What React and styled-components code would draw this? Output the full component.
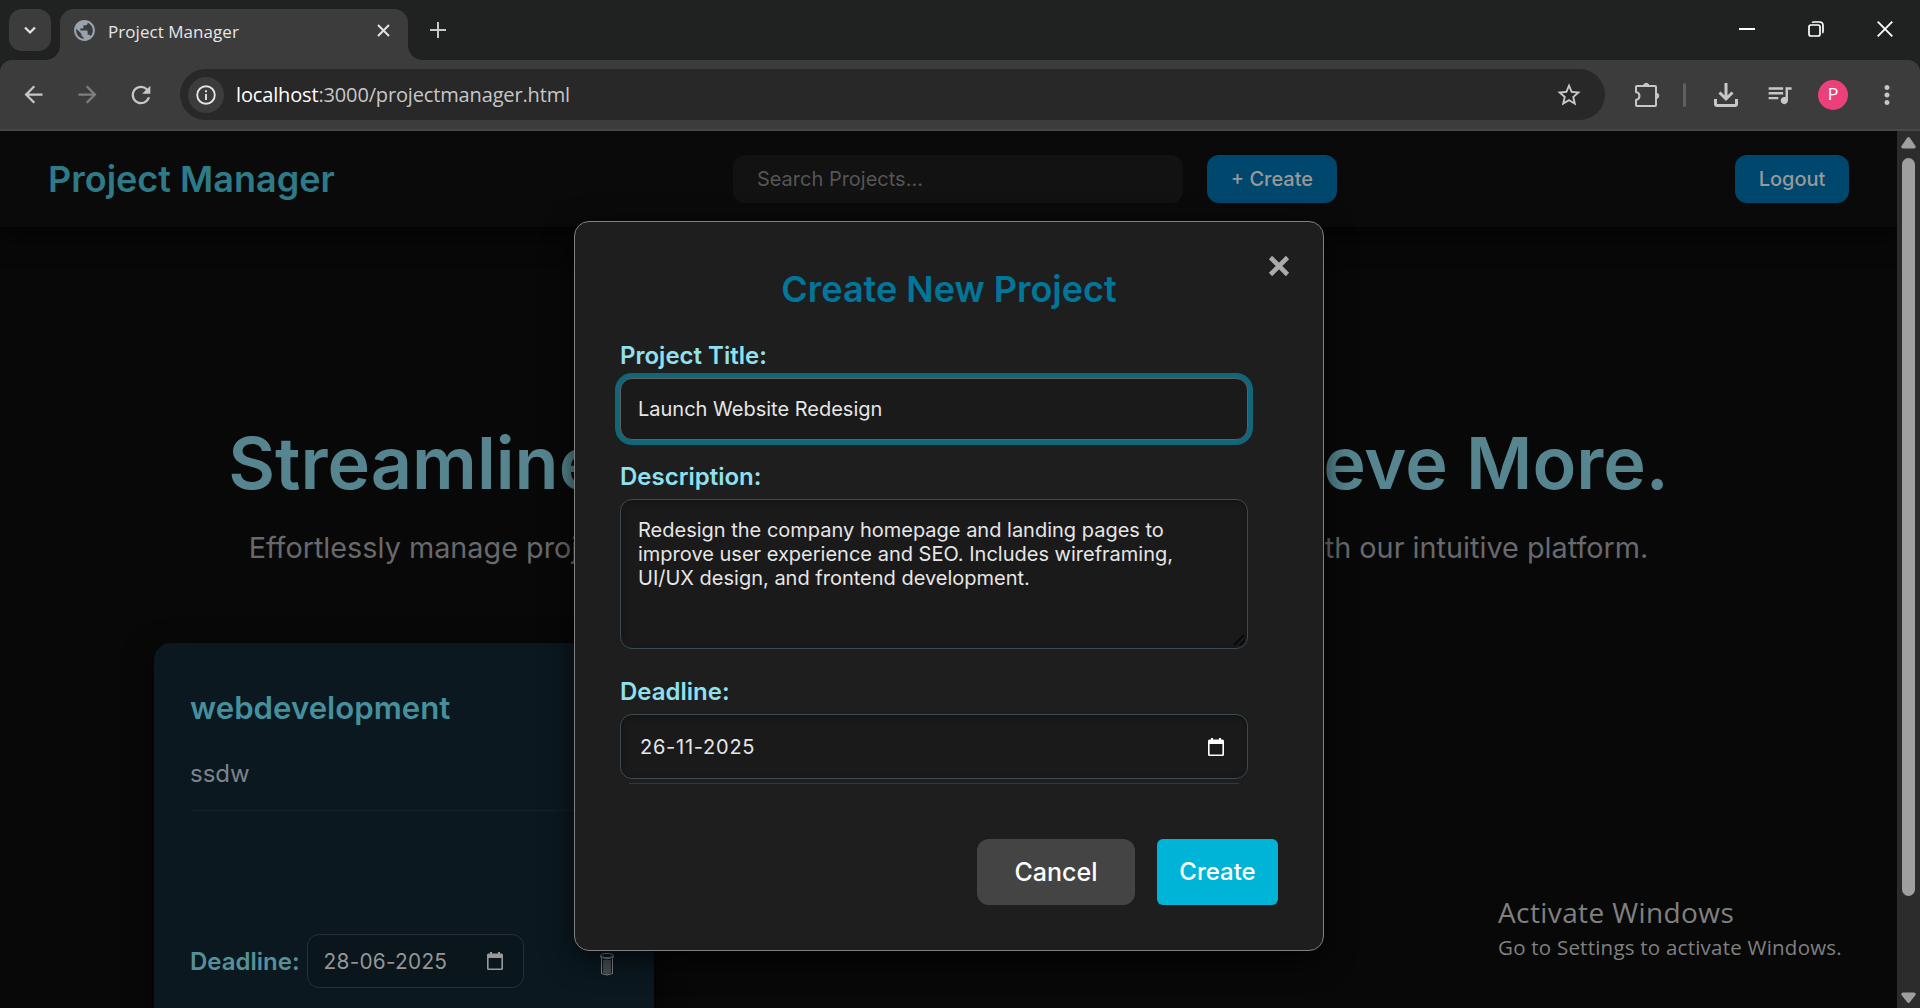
import React from "react";
import styled, { createGlobalStyle } from "styled-components";
import { MdArrowBack, MdArrowForward, MdRefresh, MdStarBorder, MdQueueMusic, MdMoreVert, MdPublic } from "react-icons/md";

const Global = createGlobalStyle`
  * { box-sizing: border-box; }
  html, body { margin: 0; padding: 0; background: #080808; overflow: hidden; }
  h1, h2, h3, p { margin: 0; }
  button { border: 0; padding: 0; margin: 0; background: none; font: inherit; color: inherit; }
`;

const ui = `"Open Sans", "Noto Sans", sans-serif`;

const Browser = styled.div`
  width: 1920px;
  height: 1008px;
  display: flex;
  flex-direction: column;
  overflow: hidden;
  font-family: Inter, sans-serif;
  background: #202221;
`;

/* Tab strip */
const TabStrip = styled.div`
  height: 60px;
  flex: none;
  display: flex;
  padding: 9px 27px 0 9px;
  align-items: flex-start;
`;
const TabSearch = styled.button`
  width: 42px;
  height: 42px;
  border-radius: 13px;
  background: #3c3c3c;
  display: grid;
  place-items: center;
`;
const Tab = styled.div`
  position: relative;
  width: 348px;
  height: 51px;
  margin-left: 9px;
  padding: 0 17px 9px 12px;
  border-radius: 14px 14px 0 0;
  background: #3c3c3c;
  display: flex;
  align-items: center;
  color: #c3c8cf;
  &::before, &::after {
    content: "";
    position: absolute;
    bottom: 0;
    width: 14px;
    height: 14px;
  }
  &::before { left: -14px; background: radial-gradient(circle at 0 0, transparent 13.5px, #3c3c3c 14px); }
  &::after { right: -14px; background: radial-gradient(circle at 100% 0, transparent 13.5px, #3c3c3c 14px); }
`;
const TabTitle = styled.span`
  flex: 1;
  margin: 3px 0 0 11px;
  font: 400 17px/24px ${ui};
  letter-spacing: 0.05px;
  color: #e6e6e6;
`;
const NewTab = styled.button`
  width: 42px;
  height: 42px;
  margin-left: 9px;
  display: grid;
  place-items: center;
`;
const WindowControls = styled.div`
  margin-left: auto;
  display: flex;
  gap: 53px;
  padding-top: 12px;
`;

/* Toolbar */
const ToolbarBack = styled.div`
  flex: none;
  background: #202221;
`;
const Toolbar = styled.div`
  height: 71px;
  padding: 9px 6px 0;
  display: flex;
  align-items: flex-start;
  background: #3c3c3c;
  border-bottom: 2px solid #474747;
  border-radius: 12px 12px 0 0;
`;
const ToolButton = styled.button`
  width: 54px;
  height: 51px;
  padding-left: ${(p) => p.$nudge || "0"};
  display: grid;
  place-items: center;
  color: ${(p) => (p.$muted ? "#7f7f7f" : "#c7c7c7")};
`;
const Omnibox = styled.div`
  flex: 1;
  height: 51px;
  margin: 0 13px 0 12px;
  padding: 0 22px 0 8px;
  border-radius: 26px;
  background: #282828;
  display: flex;
  align-items: center;
  color: #c7c7c7;
`;
const SiteInfo = styled.span`
  width: 36px;
  height: 36px;
  border-radius: 50%;
  background: #3c3c3c;
  display: grid;
  place-items: center;
`;
const Url = styled.span`
  flex: 1;
  margin-left: 12px;
  font: 400 20px/28px ${ui};
  letter-spacing: -0.15px;
  color: #c7c7c7;
  b { font-weight: 400; color: #fff; }
`;
const Separator = styled.span`
  width: 3px;
  height: 24px;
  margin: 14px 12px 0 11px;
  border-radius: 2px;
  background: #5f5f5f;
`;
const Avatar = styled.span`
  width: 30px;
  height: 30px;
  border-radius: 50%;
  background: #ec407a;
  color: #fff;
  font: 400 16px/30px Roboto, sans-serif;
  text-align: center;
`;

/* Page */
const Viewport = styled.div`
  flex: 1;
  min-height: 0;
  display: flex;
`;
const Page = styled.main`
  position: relative;
  flex: 1;
  background: #080808;
  overflow: hidden;
`;
const Scrollbar = styled.div`
  width: 23px;
  background: #2c2c2c;
  display: flex;
  flex-direction: column;
  align-items: center;
  padding: 6px 0 5px;
`;
const Thumb = styled.div`
  width: 13px;
  height: 738px;
  margin: 9px 0 auto;
  border-radius: 7px;
  background: #9f9f9f;
`;
const Nav = styled.header`
  position: relative;
  height: 96px;
  padding: 0 48px;
  display: flex;
  align-items: center;
  justify-content: space-between;
  background: #0a0a0a;
  box-shadow: 0 5px 25px rgba(0, 0, 0, 0.8);
`;
const Brand = styled.h1`
  font-size: 36px;
  line-height: 48px;
  font-weight: 600;
  white-space: nowrap;
  color: #2f7a87;
`;
const NavCenter = styled.div`
  display: flex;
  gap: 24px;
`;
const Search = styled.div`
  width: 450px;
  height: 48px;
  padding: 0 24px;
  border-radius: 12px;
  background: #121212;
  color: #555;
  font-size: 20px;
  line-height: 48px;
`;
const NavButton = styled.button`
  width: ${(p) => p.$width};
  height: 48px;
  border-radius: 12px;
  background: #00476e;
  color: #999;
  font-size: 20px;
  font-weight: 500;
`;
const Hero = styled.section`
  padding-top: 192px;
  text-align: center;
  white-space: nowrap;
`;
const HeroTitle = styled.h2`
  font-size: 72px;
  line-height: 88px;
  font-weight: 600;
  color: #56858f;
`;
const HeroText = styled.p`
  margin-top: 21px;
  font-size: 28.8px;
  line-height: 40px;
  color: #68696c;
`;
const Card = styled.article`
  width: 500px;
  height: 480px;
  margin: 75px 0 0 154px;
  padding: 44px 36px;
  border-radius: 17px;
  background: #0b1820;
  box-shadow: 0 10px 30px rgba(0, 0, 0, 0.6);
`;
const CardTitle = styled.h3`
  font-size: 31.2px;
  line-height: 42px;
  font-weight: 600;
  color: #46909e;
`;
const CardText = styled.p`
  margin-top: 30px;
  padding-bottom: 21px;
  border-bottom: 1px solid #141f27;
  font-size: 24px;
  line-height: 30px;
  color: #7e838b;
`;
const CardFooter = styled.div`
  margin-top: 123px;
  display: flex;
  align-items: center;
  color: #569099;
  font-size: 24px;
  font-weight: 600;
`;
const CardDate = styled.div`
  width: 217px;
  height: 54px;
  margin-left: 7px;
  padding: 0 20px 0 16px;
  border: 1px solid #283036;
  border-radius: 12px;
  background: #0a151c;
  display: flex;
  align-items: center;
  justify-content: space-between;
  color: #959595;
  font-size: 20.8px;
  font-weight: 400;
  letter-spacing: 0.25px;
`;
const Trash = styled.button`
  margin: 6px 0 0 76px;
  line-height: 0;
`;

/* Dialog */
const Dialog = styled.section`
  position: absolute;
  left: 574px;
  top: 90px;
  width: 750px;
  height: 730px;
  padding: 46px 45px 45px;
  border: 1px solid #808080;
  border-radius: 15px;
  background: #1e1e1e;
  box-shadow: 0 8px 30px rgba(0, 0, 0, 0.7);
  display: flex;
  flex-direction: column;
`;
const Close = styled.button`
  position: absolute;
  right: 33px;
  top: 33px;
  line-height: 0;
`;
const DialogTitle = styled.h2`
  font-size: 36px;
  line-height: 42px;
  font-weight: 600;
  text-align: center;
  color: #00769b;
`;
const Form = styled.div`
  width: 628px;
  margin-top: 31px;
  display: flex;
  flex-direction: column;
`;
const Label = styled.label`
  margin-bottom: 7px;
  font-size: 24px;
  line-height: 30px;
  font-weight: 600;
  color: #90e0ef;
`;
const Field = styled.div`
  position: relative;
  height: ${(p) => p.$height};
  margin-bottom: ${(p) => p.$gap || "0"};
  padding: ${(p) => (p.$multiline ? "18px 17px" : "0 17px")};
  display: flex;
  align-items: ${(p) => (p.$multiline ? "flex-start" : "center")};
  justify-content: space-between;
  border: 1px solid ${(p) => (p.$focused ? "#5f5f5f" : "#3d4a52")};
  border-radius: 12px;
  background: #1a1a1a;
  box-shadow: ${(p) => (p.$focused ? "0 0 0 5px #116779" : "inset 0 2px 6px rgba(0, 0, 0, 0.3)")};
  font-size: 20px;
  line-height: 24px;
  font-weight: 400;
  color: #e6e6e6;
  white-space: pre;
`;
const DateValue = styled(Field)`
  padding: 0 23px 0 19px;
  letter-spacing: 0.75px;
`;
const Grip = styled.svg`
  position: absolute;
  right: 2px;
  bottom: 2px;
`;
const NextFieldEdge = styled.div`
  height: 1px;
  margin: 4px 9px 0;
  background: #17434b;
`;
const Actions = styled.div`
  margin-top: auto;
  display: flex;
  justify-content: flex-end;
  gap: 22px;
`;
const Action = styled.button`
  width: ${(p) => (p.$primary ? "121px" : "158px")};
  height: 66px;
  padding-bottom: ${(p) => (p.$primary ? "2px" : "0")};
  border-radius: ${(p) => (p.$primary ? "6px" : "12px")};
  background: ${(p) => (p.$primary ? "#00b4d8" : "#444")};
  color: #fff;
  font-size: ${(p) => (p.$primary ? "24px" : "25px")};
  font-weight: 500;
`;

const Watermark = styled.div`
  position: absolute;
  left: 1498px;
  top: 761px;
  color: #808080;
  font: 400 20.5px/30px ${ui};
  letter-spacing: 0.23px;
  white-space: nowrap;
  strong { display: block; font-size: 28px; line-height: 40px; font-weight: 400; letter-spacing: 0.4px; }
`;

const Stroke = ({ w = 24, h = w, d, sw = 2, color = "currentColor", cap = "butt" }) => (
  <svg width={w} height={h} viewBox={`0 0 ${w} ${h}`} fill="none" stroke={color} strokeWidth={sw} strokeLinecap={cap}>
    <path d={d} />
  </svg>
);

const Calendar = ({ color, w = 16 }) => (
  <svg width={w} height="18" viewBox="0 0 16 18" preserveAspectRatio="none">
    <path fill={color} fillRule="evenodd" d="M3 0h2v1.5h6V0h2v1.5h1.5A1.5 1.5 0 0 1 16 3v13.5a1.5 1.5 0 0 1-1.500 1.500h-13A1.500 1.500 0 0 1 0 16.500V3a1.500 1.500 0 0 1 1.500-1.500H3zM1.600 6v10.400h12.800V6z" />
  </svg>
);

export default function App() {
  return (
    <Browser>
      <Global />
      <TabStrip>
        <TabSearch><Stroke w={14} h={14} d="M2 4.500 7 9.500 12 4.500" sw={2.2} color="#e3e3e3" /></TabSearch>
        <Tab>
          <MdPublic size={25} color="#9aa3ad" />
          <TabTitle>Project Manager</TabTitle>
          <Stroke w={15} d="M2 2 13 13M13 2 2 13" color="#e3e3e3" />
        </Tab>
        <NewTab><Stroke w={16} d="M8 0V16M0 8H16" color="#c7c7c7" /></NewTab>
        <WindowControls>
          <Stroke w={16} d="M0 8H16" color="#fff" />
          <svg width="16" height="16" viewBox="0 0 16 16" fill="none" stroke="#fff" strokeWidth="1.700">
            <rect x="1" y="4" width="11" height="11" rx="2" />
            <path d="M4 1.500Q4.500 1 6 1h5.500Q15 1 15 4.500V10q0 1.500-.6 2" />
          </svg>
          <Stroke w={16} d="M.7.7 15.300 15.300M15.300.7.7 15.300" sw={1.8} color="#fff" />
        </WindowControls>
      </TabStrip>
      <ToolbarBack>
        <Toolbar>
          <ToolButton><MdArrowBack size={27} /></ToolButton>
          <ToolButton $muted><MdArrowForward size={27} /></ToolButton>
          <ToolButton><MdRefresh size={28} /></ToolButton>
          <Omnibox>
            <SiteInfo>
              <svg width="20" height="20" viewBox="0 0 20 20" fill="none" stroke="#e3e3e3" strokeWidth="1.900">
                <circle cx="10" cy="10" r="8.800" />
                <path d="M10 9v6M10 5.200v2" />
              </svg>
            </SiteInfo>
            <Url><b>localhost</b>:3000/projectmanager.html</Url>
            <MdStarBorder size={28} />
          </Omnibox>
          <ToolButton $nudge="3px">
            <svg width="26" height="26" viewBox="0 0 26 26" fill="none" stroke="currentColor" strokeWidth="2" strokeLinejoin="round">
              <path d="M3 4h18q1 0 1 1v18q0 1-1 1H3q-1 0-1-1v-5q3.500-.7 3.500-4T2 10V5q0-1 1-1z" />
              <path d="M9.500 4a2.700 2.700 0 0 1 5.400 0zM22 11a2.800 2.800 0 0 1 0 5.600z" fill="currentColor" stroke="currentColor" strokeWidth="1" />
            </svg>
          </ToolButton>
          <Separator />
          <ToolButton $nudge="2px">
            <svg width="24" height="24" viewBox="0 0 24 24" fill="none" stroke="currentColor" strokeWidth="3">
              <path d="M12 0v16M5.500 9.500 12 16l6.500-6.500M1.500 16v5q0 1.500 1.500 1.500h18q1.500 0 1.500-1.500v-5" />
            </svg>
          </ToolButton>
          <ToolButton><MdQueueMusic size={29} /></ToolButton>
          <ToolButton><Avatar>P</Avatar></ToolButton>
          <ToolButton><MdMoreVert size={30} /></ToolButton>
        </Toolbar>
      </ToolbarBack>
      <Viewport>
        <Page>
          <Nav>
            <Brand>Project Manager</Brand>
            <NavCenter>
              <Search>Search Projects...</Search>
              <NavButton $width="130px">+ Create</NavButton>
            </NavCenter>
            <NavButton $width="114px">Logout</NavButton>
          </Nav>
          <Hero>
            <HeroTitle>Streamline Your Workflow. Achieve More.</HeroTitle>
            <HeroText>Effortlessly manage projects, track progress, and collaborate with your team with our intuitive platform.</HeroText>
          </Hero>
          <Card>
            <CardTitle>webdevelopment</CardTitle>
            <CardText>ssdw</CardText>
            <CardFooter>
              Deadline:
              <CardDate>28-06-2025<Calendar color="#999" /></CardDate>
              <Trash aria-label="Delete project">
                <svg width="14" height="23" viewBox="0 0 14 23" fill="none" stroke="#85898c" strokeWidth="1">
                  <ellipse cx="7" cy="2.500" rx="6.300" ry="2" />
                  <path d="M.7 2.500v2q6.300 2.800 12.600 0v-2M1.500 5.500v15q5.500 3 11 0v-15M4 7v13M6 7v14M8 7v14M10 7v13" />
                </svg>
              </Trash>
            </CardFooter>
          </Card>

          <Dialog role="dialog">
            <Close aria-label="Close"><Stroke w={22} d="M2.500 2.500 19.500 19.500M19.500 2.500 2.500 19.500" sw={4.6} color="#aaa" /></Close>
            <DialogTitle>Create New Project</DialogTitle>
            <Form>
              <Label>Project Title:</Label>
              <Field $focused $height="62px" $gap="22px">Launch Website Redesign</Field>
              <Label>Description:</Label>
              <Field $multiline $height="150px" $gap="28px">
                {"Redesign the company homepage and landing pages to\nimprove user experience and SEO. Includes wireframing,\nUI/UX design, and frontend development."}
                <Grip width="12" height="12" viewBox="0 0 12 12" stroke="#050505" strokeWidth="1.500">
                  <path d="M1 11 11 1M7 11 11 7" />
                </Grip>
              </Field>
              <Label>Deadline:</Label>
              <DateValue $height="65px">26-11-2025<Calendar color="#fff" /></DateValue>
              <NextFieldEdge />
            </Form>
            <Actions>
              <Action>Cancel</Action>
              <Action $primary>Create</Action>
            </Actions>
          </Dialog>

          <Watermark><strong>Activate Windows</strong>Go to Settings to activate Windows.</Watermark>
        </Page>
        <Scrollbar>
          <svg width="15" height="12" viewBox="0 0 15 12"><path d="M6 1Q7.500-.8 9 1l5.500 8q.8 2-1.500 2.500H2Q-.3 11 .5 9z" fill="#9f9f9f" /></svg>
          <Thumb />
          <svg width="15" height="11" viewBox="0 0 15 11"><path d="M6 10Q7.500 11.800 9 10l5.500-7Q15.300 1 13 .5H2Q-.3 1 .5 3z" fill="#9f9f9f" /></svg>
        </Scrollbar>
      </Viewport>
    </Browser>
  );
}
